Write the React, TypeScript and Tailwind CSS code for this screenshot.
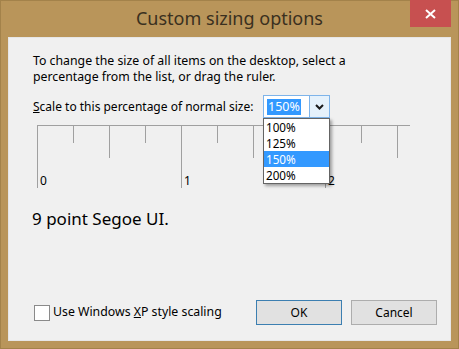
import React from "react";

function Ruler() {
  const x0 = 0;
  const unit = 144;
  const ticks: { x: number; h: number }[] = [];
  for (let i = 0; i <= 10; i++) {
    const x = x0 + i * 36;
    const h = i % 4 === 0 ? 63 : i % 2 === 0 ? 33 : 18;
    ticks.push({ x, h });
  }
  return (
    <svg width="380" height="73" className="block">
      <line x1="0.5" y1="7.5" x2="373" y2="7.5" stroke="#a0a0a0" strokeWidth="1" />
      {ticks.map((t, i) => (
        <line key={i} x1={t.x + 0.5} y1="7" x2={t.x + 0.5} y2={7 + t.h} stroke="#a0a0a0" strokeWidth="1" />
      ))}
      {[0, 1, 2].map((n) => (
        <text key={n} x={x0 + n * unit + 3} y="67" fontSize="12" fill="#000" fontFamily="'Noto Sans', sans-serif">
          {n}
        </text>
      ))}
    </svg>
  );
}

export default function App() {
  return (
    <div className="w-[459px] h-[349px] bg-[#b9955a] border border-[#a3824a] flex flex-col" style={{ fontFamily: "'Noto Sans', 'Liberation Sans', sans-serif" }}>
      <div className="relative h-[36px] flex items-center justify-center">
        <span className="text-[18px] text-[#3a3020] leading-none pb-[2px]">Custom sizing options</span>
        <div className="absolute right-[7px] top-[-1px] w-[41px] h-[27px] bg-[#c75050] flex items-center justify-center">
          <svg width="11" height="10" viewBox="0 0 11 10">
            <path d="M1 1 L10 9 M10 1 L1 9" stroke="#fff" strokeWidth="2" />
          </svg>
        </div>
      </div>
      <div className="relative mx-[7px] mb-[7px] flex-1 bg-[#f0f0f0] border border-[#e6e6e6] flex flex-col text-[12px] text-black">
        <div className="pl-[24px] pt-[15px] leading-[16px] text-[12.3px]">
          <div>To change the size of all items on the desktop, select a</div>
          <div>percentage from the list, or drag the ruler.</div>
        </div>
        <div className="flex items-center mt-[10px] pl-[24px] h-[23px]">
          <span className="w-[230px]">
            <span className="underline">S</span>cale to this percentage of normal size:
          </span>
          <div className="relative w-[67px] h-[23px] border border-[#7eb4ea] bg-white flex">
            <div className="flex-1 flex items-center pl-[3px]">
              <span className="bg-[#3399ff] text-white px-[1px] leading-[16px] text-[12.5px]">150%</span>
            </div>
            <div className="w-[20px] bg-[#e5f1fb] border-l border-[#7eb4ea] flex items-center justify-center">
              <svg width="9" height="6" viewBox="0 0 9 6">
                <path d="M1 1 L4.5 4.5 L8 1" stroke="#1a1a1a" strokeWidth="2" fill="none" />
              </svg>
            </div>
            <div className="absolute left-[-1px] top-[22px] w-[67px] bg-white border border-[#646464] shadow-[2px_2px_3px_rgba(0,0,0,0.35)] z-10 leading-[16px] text-[11.7px]">
              <div className="pl-[2px] h-[16px]">100%</div>
              <div className="pl-[2px] h-[16px]">125%</div>
              <div className="pl-[2px] h-[16px] bg-[#3399ff] text-white">150%</div>
              <div className="pl-[2px] h-[16px]">200%</div>
            </div>
          </div>
        </div>
        <div className="pl-[28px]">
          <Ruler />
        </div>
        <div className="pl-[23px] mt-[17px] text-[17px] leading-[21px]">9 point Segoe UI.</div>
        <div className="mt-auto flex items-center pb-[15px] pl-[25px] pr-[13px]">
          <div className="w-[16px] h-[16px] bg-white border border-[#8a8a8a]" />
          <span className="ml-[3px] text-[12.3px]">
            Use Windows <span className="underline">X</span>P style scaling
          </span>
          <div className="ml-auto flex gap-[9px]">
            <div className="w-[86px] h-[25px] border border-[#3c7fb1] bg-[#e1e1e1] flex items-center justify-center">OK</div>
            <div className="w-[86px] h-[25px] border border-[#adadad] bg-[#e1e1e1] flex items-center justify-center">Cancel</div>
          </div>
        </div>
      </div>
    </div>
  );
}
